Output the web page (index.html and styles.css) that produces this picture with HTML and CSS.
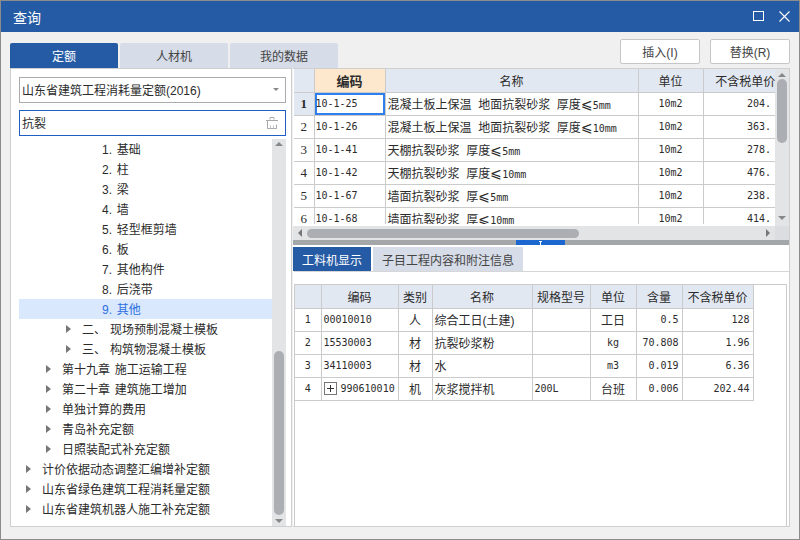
FILE: index.html
```html
<!DOCTYPE html>
<html lang="zh">
<head>
<meta charset="utf-8">
<title>查询</title>
<link rel="stylesheet" href="styles.css">
</head>
<body>
<div class="window">
  <header class="titlebar">
    <span class="title">查询</span>
    <span class="win-btns">
      <svg width="11" height="11" viewBox="0 0 11 11"><rect x="0.5" y="0.5" width="10" height="9" fill="none" stroke="#fff"/></svg>
      <svg width="11" height="11" viewBox="0 0 11 11"><path d="M0.5 0.5L10.5 10.5M10.5 0.5L0.5 10.5" fill="none" stroke="#fff" stroke-width="1.1"/></svg>
    </span>
  </header>
  <div class="content">
    <div class="toolbar">
      <div class="tabs">
        <div class="tab active">定额</div>
        <div class="tab">人材机</div>
        <div class="tab">我的数据</div>
      </div>
      <div class="actions">
        <button class="btn">插入(I)</button>
        <button class="btn">替换(R)</button>
      </div>
    </div>
    <div class="panes">
      <section class="left">
        <div class="select"><span>山东省建筑工程消耗量定额(2016)</span><i class="select-caret"></i></div>
        <div class="search"><span>抗裂</span>
          <svg width="12" height="12" viewBox="0 0 12 12" fill="none" stroke="#a9a9a9"><path d="M4 2.500V0.500h4v2"/><path d="M0 3.500h12"/><path d="M1.500 3.500v8h9v-4"/><path d="M4.500 8.500v3M7.500 8.500v3" stroke="#c4c4c4"/></svg>
        </div>
        <div class="tree-wrap">
          <ul class="tree">
            <li class="leaf">1. 基础</li>
            <li class="leaf">2. 柱</li>
            <li class="leaf">3. 梁</li>
            <li class="leaf">4. 墙</li>
            <li class="leaf">5. 轻型框剪墙</li>
            <li class="leaf">6. 板</li>
            <li class="leaf">7. 其他构件</li>
            <li class="leaf">8. 后浇带</li>
            <li class="leaf selected">9. 其他</li>
            <li class="node l2"><i class="arrow"></i><span class="ord">二、</span>现场预制混凝土模板</li>
            <li class="node l2"><i class="arrow"></i><span class="ord">三、</span>构筑物混凝土模板</li>
            <li class="node l1"><i class="arrow"></i>第十九章 施工运输工程</li>
            <li class="node l1"><i class="arrow"></i>第二十章 建筑施工增加</li>
            <li class="node l1"><i class="arrow"></i>单独计算的费用</li>
            <li class="node l1"><i class="arrow"></i>青岛补充定额</li>
            <li class="node l1"><i class="arrow"></i>日照装配式补充定额</li>
            <li class="node l0"><i class="arrow"></i>计价依据动态调整汇编增补定额</li>
            <li class="node l0"><i class="arrow"></i>山东省绿色建筑工程消耗量定额</li>
            <li class="node l0"><i class="arrow"></i>山东省建筑机器人施工补充定额</li>
          </ul>
          <div class="vbar tree-bar">
            <i class="tri up"></i>
            <b class="thumb-v tree-thumb"></b>
            <i class="tri down"></i>
          </div>
        </div>
      </section>
      <section class="right">
        <div class="upper">
          <div class="upper-main">
            <div class="view">
              <table class="grid top-grid">
                <colgroup><col class="c-a1"><col class="c-a2"><col class="c-a3"><col class="c-a4"><col class="c-a5"></colgroup>
                <thead><tr><th></th><th class="hl">编码</th><th>名称</th><th>单位</th><th>不含税单价</th></tr></thead>
                <tbody>
                  <tr><th class="rowno cur">1</th><td class="m code focus">10-1-25</td><td class="nm">混凝土板上保温 地面抗裂砂浆 厚度<span class="le">⩽</span><span class="m">5mm</span></td><td class="ctr m">10m2</td><td class="rt m">204.</td></tr>
                  <tr><th class="rowno">2</th><td class="m code">10-1-26</td><td class="nm">混凝土板上保温 地面抗裂砂浆 厚度<span class="le">⩽</span><span class="m">10mm</span></td><td class="ctr m">10m2</td><td class="rt m">363.</td></tr>
                  <tr><th class="rowno">3</th><td class="m code">10-1-41</td><td class="nm">天棚抗裂砂浆 厚度<span class="le">⩽</span><span class="m">5mm</span></td><td class="ctr m">10m2</td><td class="rt m">278.</td></tr>
                  <tr><th class="rowno">4</th><td class="m code">10-1-42</td><td class="nm">天棚抗裂砂浆 厚度<span class="le">⩽</span><span class="m">10mm</span></td><td class="ctr m">10m2</td><td class="rt m">476.</td></tr>
                  <tr><th class="rowno">5</th><td class="m code">10-1-67</td><td class="nm">墙面抗裂砂浆 厚<span class="le">⩽</span><span class="m">5mm</span></td><td class="ctr m">10m2</td><td class="rt m">238.</td></tr>
                  <tr><th class="rowno">6</th><td class="m code">10-1-68</td><td class="nm">墙面抗裂砂浆 厚<span class="le">⩽</span><span class="m">10mm</span></td><td class="ctr m">10m2</td><td class="rt m">414.</td></tr>
                </tbody>
              </table>
            </div>
            <div class="vbar top-bar">
              <i class="tri up"></i>
              <b class="thumb-v top-thumb"></b>
              <i class="tri down"></i>
            </div>
          </div>
          <div class="hrow">
            <div class="hbar">
              <i class="tri left-tri"></i>
              <b class="thumb-h"></b>
              <i class="tri right-tri"></i>
            </div>
            <div class="corner"></div>
          </div>
          <div class="splitter"><div class="handle"><svg class="mini" width="3" height="4" viewBox="0 0 3 4"><path d="M0 0h3v1H2v3H1V1H0z" fill="#fff"/></svg></div></div>
        </div>
        <div class="lower">
          <div class="lower-tabs">
            <div class="ltab active">工料机显示</div>
            <div class="ltab">子目工程内容和附注信息</div>
          </div>
          <div class="lower-gap"></div>
          <div class="lower-grid">
            <table class="grid bottom-grid">
              <colgroup><col class="c-b1"><col class="c-b2"><col class="c-b3"><col class="c-b4"><col class="c-b5"><col class="c-b6"><col class="c-b7"><col class="c-b8"></colgroup>
              <thead><tr><th></th><th>编码</th><th>类别</th><th>名称</th><th>规格型号</th><th>单位</th><th>含量</th><th>不含税单价</th></tr></thead>
              <tbody>
                <tr><td class="ctr m">1</td><td class="m">00010010</td><td class="ctr">人</td><td>综合工日(土建)</td><td></td><td class="ctr">工日</td><td class="rt2 m">0.5</td><td class="rt2 m">128</td></tr>
                <tr><td class="ctr m">2</td><td class="m">15530003</td><td class="ctr">材</td><td>抗裂砂浆粉</td><td></td><td class="ctr m">kg</td><td class="rt2 m">70.808</td><td class="rt2 m">1.96</td></tr>
                <tr><td class="ctr m">3</td><td class="m">34110003</td><td class="ctr">材</td><td>水</td><td></td><td class="ctr m">m3</td><td class="rt2 m">0.019</td><td class="rt2 m">6.36</td></tr>
                <tr><td class="ctr m">4</td><td class="m"><svg class="plus" width="13" height="13" viewBox="0 0 13 13" fill="none" stroke="#777"><rect x="0.5" y="0.5" width="12" height="12"/><path d="M3 6.500h7M6.500 3v7" stroke="#333"/></svg>990610010</td><td class="ctr">机</td><td>灰浆搅拌机</td><td class="m">200L</td><td class="ctr">台班</td><td class="rt2 m">0.006</td><td class="rt2 m">202.44</td></tr>
              </tbody>
            </table>
          </div>
        </div>
      </section>
    </div>
  </div>
</div>
</body>
</html>
```
FILE: styles.css
```css
* { box-sizing: border-box; }
html, body { margin: 0; padding: 0; }
body {
  font-family: "Liberation Sans", "Noto Sans CJK SC", sans-serif;
  font-size: 12px;
  color: #2b2b2b;
}
i, b { display: block; }
.window {
  width: 800px;
  height: 540px;
  display: flex;
  flex-direction: column;
  background: #f0f0f0;
  border: 1px solid #8c8c8c;
}
.titlebar {
  height: 31px;
  background: #255ba5;
  color: #fff;
  display: flex;
  align-items: center;
  justify-content: space-between;
  padding: 0 9px 0 12px;
  flex: none;
}
.title { font-size: 14px; }
.win-btns { display: flex; gap: 15px; align-items: center; }
.win-btns svg { display: block; }
.content {
  flex: 1;
  display: flex;
  flex-direction: column;
  padding: 0 9px 12px 9px;
  min-height: 0;
}
.toolbar {
  height: 36px;
  display: flex;
  justify-content: space-between;
  flex: none;
}
.tabs { display: flex; gap: 2px; align-self: flex-end; }
.tab {
  width: 108px;
  height: 25px;
  background: #d6dce8;
  border-radius: 2px 2px 0 0;
  display: flex;
  align-items: center;
  justify-content: center;
  color: #444;
}
.tab.active { background: #255ba5; color: #fff; }
.actions { display: flex; gap: 10px; padding-top: 7px; }
.btn {
  width: 80px;
  height: 25px;
  padding: 0;
  font: inherit;
  color: #444;
  background: #fff;
  border: 1px solid #c6c6c6;
  border-radius: 2px;
}
.panes { flex: 1; display: flex; gap: 1px; min-height: 0; }
.left {
  width: 282px;
  background: #fff;
  border: 1px solid #cfcfcf;
  padding: 8px 5px 0 8px;
  display: flex;
  flex-direction: column;
  flex: none;
}
.select {
  height: 26px;
  border: 1px solid #ababab;
  display: flex;
  align-items: center;
  justify-content: space-between;
  padding: 0 6px 1px 2px;
  flex: none;
}
.select-caret {
  width: 0; height: 0;
  border-left: 3px solid transparent;
  border-right: 3px solid transparent;
  border-top: 3px solid #888;
}
.search {
  height: 26px;
  margin-top: 7px;
  border: 1px solid #1f5fc4;
  display: flex;
  align-items: center;
  justify-content: space-between;
  padding: 0 7px 1px 2px;
  flex: none;
}
.search svg { display: block; }
.tree-wrap { flex: 1; display: flex; margin-top: 3px; min-height: 0; }
.tree {
  list-style: none;
  margin: 0;
  padding: 0;
  flex: 1;
  min-width: 0;
}
.tree li {
  height: 20px;
  display: flex;
  align-items: center;
  white-space: pre-wrap;
  word-spacing: 1.3px;
  padding-bottom: 1px;
}
.leaf { padding-left: 83px; }
.leaf.selected { background: #d9e8fd; color: #2b6fe0; }
.node .arrow {
  width: 0; height: 0;
  border-top: 4px solid transparent;
  border-bottom: 4px solid transparent;
  border-left: 5px solid #777;
  margin-right: 11px;
}
.l0 { padding-left: 7px; }
.l1 { padding-left: 27px; }
.l2 { padding-left: 47px; }
.ord { display: inline-block; width: 28px; }
.vbar {
  width: 14px;
  flex: none;
  background: #e3e4e6;
  display: flex;
  flex-direction: column;
  align-items: center;
}
.tri { width: 0; height: 0; flex: none; }
.tri.up {
  margin-top: 4px;
  border-left: 4px solid transparent;
  border-right: 4px solid transparent;
  border-bottom: 4px solid #888;
}
.tree-bar .tri.up { margin-top: 3px; }
.tri.down {
  margin-bottom: 3px;
  border-left: 4px solid transparent;
  border-right: 4px solid transparent;
  border-top: 4px solid #888;
}
.top-bar .tri.down { margin-bottom: 6px; }
.thumb-v { width: 10px; background: #abaeb3; border-radius: 5px; flex: none; }
.tree-thumb { height: 164px; margin-top: auto; margin-bottom: 4px; }
.top-thumb { height: 64px; margin-top: 2px; margin-bottom: auto; }
.right {
  flex: 1;
  min-width: 0;
  display: flex;
  flex-direction: column;
  background: #fff;
  border-right: 1px solid #cfcfcf;
  border-bottom: 1px solid #cfcfcf;
  border-top: 1px solid #cfcfcf;
}
.upper { flex: none; }
.upper-main { display: flex; height: 157px; padding-left: 1px; }
.view { width: 481px; height: 155px; overflow: hidden; flex: none; }
.top-bar { flex: 1; width: auto; }
.grid {
  border-collapse: collapse;
  table-layout: fixed;
}
.grid th, .grid td {
  height: 23px;
  padding: 0 2px;
  border: 1px solid #cbcbcb;
  white-space: nowrap;
  overflow: hidden;
}
.grid thead th { font-weight: 400; background: #e2e8f2; text-align: center; padding: 0; }
.top-grid { width: 493px; }
.top-grid thead th { border-top: 0; }
.top-grid tr > :first-child { border-left: 0; }
.top-grid tr > :last-child { border-right: 0; }
.c-a1 { width: 20px; }
.c-a2 { width: 71px; }
.c-a3 { width: 253px; }
.c-a4 { width: 65px; }
.c-a5 { width: 84px; }
.grid thead th.hl { background: #fde7cd; font-weight: 700; font-size: 13px; }
.grid th.rowno { font-family: "Liberation Serif", serif; font-weight: 400; background: #fff; text-align: center; font-size: 13px; padding: 0; }
.grid th.rowno.cur { background: #e2e8f2; font-weight: 700; }
.m { font-family: "DejaVu Sans Mono", monospace; font-size: 10px; }
.grid td.code { padding-left: 1px; }
.nm { word-spacing: 3.3px; }
.le { font-family: "DejaVu Sans", sans-serif; font-size: 14px; line-height: 12px; display: inline-block; width: 12px; text-align: center; }
.ctr { text-align: center; }
.grid td.rt { text-align: right; padding-right: 16px; }
.grid td.rt2 { text-align: right; padding-right: 3px; }
.grid td.focus { box-shadow: inset 0 0 0 2px #2f80ed; }
.hrow { display: flex; height: 14px; }
.hbar {
  flex: 1;
  background: #e3e4e6;
  display: flex;
  align-items: center;
  padding: 0 5px;
}
.thumb-h { width: 272px; height: 9px; background: #abaeb3; border-radius: 5px; margin-left: 5px; margin-right: auto; }
.tri.left-tri {
  border-top: 4px solid transparent;
  border-bottom: 4px solid transparent;
  border-right: 4px solid #777;
}
.tri.right-tri {
  border-top: 4px solid transparent;
  border-bottom: 4px solid transparent;
  border-left: 4px solid #777;
}
.corner { width: 14px; background: #dcdde0; }
.splitter {
  height: 5px;
  background: #a4a7aa;
  display: flex;
  justify-content: center;
  padding-right: 2px;
}
.handle {
  width: 49px;
  background: #1c66d0;
  display: flex;
  justify-content: center;
}
.mini { display: block; margin-top: 1px; }
.lower { flex: 1; display: flex; flex-direction: column; min-height: 0; padding-top: 2px; }
.lower-tabs { display: flex; gap: 2px; height: 24px; flex: none; }
.ltab {
  background: #d6dce8;
  color: #444;
  display: flex;
  align-items: center;
  justify-content: center;
  width: 150px;
}
.ltab.active { background: #255ba5; color: #fff; width: 78px; }
.lower-gap { height: 13px; border-top: 1px solid #d6d6d6; flex: none; margin-left: 1px; }
.lower-grid {
  flex: 1;
  margin: 0 2px 0 1px;
  border: 1px solid #cbcbcb;
  border-bottom: 0;
  min-height: 0;
}
.bottom-grid { width: 458px; }
.bottom-grid thead th { border-top: 0; }
.bottom-grid tr > :first-child { border-left: 0; }
.c-b1 { width: 26px; }
.c-b2 { width: 77px; }
.c-b3 { width: 34px; }
.c-b4 { width: 100px; }
.c-b5 { width: 58px; }
.c-b6 { width: 46px; }
.c-b7 { width: 46px; }
.c-b8 { width: 71px; }
.plus { vertical-align: middle; margin-right: 4px; }
```
